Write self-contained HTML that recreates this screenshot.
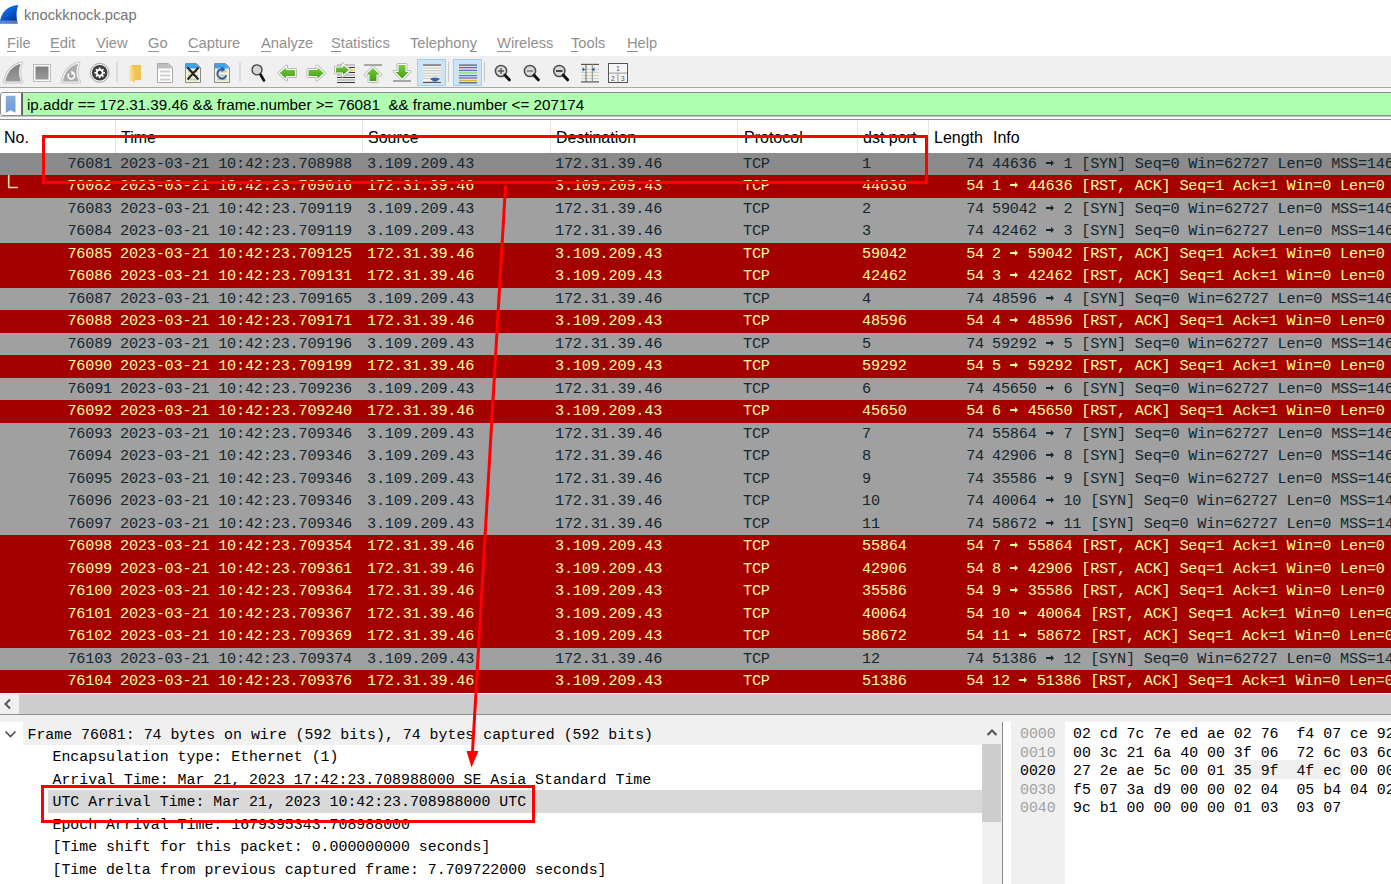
<!DOCTYPE html>
<html><head><meta charset="utf-8">
<style>
*{margin:0;padding:0;box-sizing:border-box}
html,body{width:1391px;height:884px;overflow:hidden;background:#fff}
body{position:relative;font-family:"Liberation Sans",sans-serif;color:#000}
.a{position:absolute}
.sans{font-family:"Liberation Sans",sans-serif}
.mono{font-family:"Liberation Mono",monospace}
#title{left:24px;top:5px;font-size:14.7px;line-height:20px;color:#747474;white-space:nowrap}
.menu{top:33.5px;font-size:14.7px;line-height:18px;color:#909090;white-space:nowrap}
.menu u{text-decoration:none;border-bottom:1px solid #909090}
#toolbar{left:0;top:56px;width:1391px;height:31px;background:#f0f0f0}
#tbline{left:0;top:87px;width:1391px;height:1px;background:#a8a8a8}
#filterwrap{left:0;top:88px;width:1391px;height:32px;background:#f7f7f7}
#filter{left:0;top:92px;width:1395px;height:24px;border:1px solid #8c8c8c;border-radius:3px;background:#b0ffb0;overflow:hidden}
#bm{left:0;top:0;width:22px;height:22px;background:#fff;border-right:2px solid #666}
#ftext{left:26px;top:3px;font-size:15.2px;line-height:18px;white-space:nowrap;color:#000}
#fline{left:0;top:119px;width:1391px;height:1px;background:#8d9299}
#fb2{left:0;top:116px;width:1391px;height:1px;background:#c4c4c4}
#hdr{left:0;top:120px;width:1391px;height:33px;background:#fff}
.hs{top:0;width:1px;height:33px;background:#e3e3e3}
.ht{top:9px;font-size:16px;line-height:18px;white-space:nowrap;color:#000}
.row{position:absolute;left:0;width:1391px;overflow:hidden;white-space:nowrap;font-family:"Liberation Mono",monospace;font-size:15.2px;letter-spacing:-0.19px}
.row .c{position:absolute;top:2px;line-height:18px}
.row.g{background:#a0a0a0;color:#12272e;--fg:#12272e}
.row.sel{background:#8b8b8b;color:#12272e;--fg:#12272e}
.row.r{background:#a40000;color:#fffc9c;--fg:#fffc9c}
.ar{position:relative;color:transparent}
.ar::before{content:"";position:absolute;left:0.5px;top:var(--art);width:6px;height:1.5px;background:var(--fg)}
.ar::after{content:"";position:absolute;left:5px;top:calc(var(--art) - 2.25px);width:0;height:0;border-left:3.8px solid var(--fg);border-top:3px solid transparent;border-bottom:3px solid transparent}
.row{--art:7px}
.c.no{right:1279px;text-align:right}
.c.tm{left:120px}
.c.src{left:367px}
.c.dst{left:555px}
.c.pr{left:743px}
.c.dp{left:862px}
.c.ln{right:407px;text-align:right}
.c.inf{left:992px}
#hsb{left:0;top:693px;width:1391px;height:21px;background:#fff}
#hsbl{left:0;top:694px;width:19px;height:20px;background:#f0f0f0}
#hsbs{left:19px;top:694px;width:1372px;height:20px;background:#cdcdcd}
#split1{left:0;top:714px;width:1391px;height:1px;background:#8a8f96}
#split2{left:0;top:715px;width:1391px;height:7px;background:#f0f0f0}
#det{left:0;top:722px;width:1002px;height:162px;background:#fff;overflow:hidden}
.dl{position:absolute;left:0;width:982px;font-family:"Liberation Mono",monospace;font-size:14.9px;white-space:nowrap;line-height:18px}
#vsb{left:982px;top:722px;width:20px;height:162px;background:#f0f0f0}
#vsbs{left:982px;top:744px;width:19px;height:78px;background:#cdcdcd}
#vsplit{left:1002px;top:722px;width:1px;height:162px;background:#8a8a8a}
#hex{left:1003px;top:722px;width:388px;height:162px;background:#fff}
#hexoff{left:1011px;top:722px;width:54px;height:162px;background:#f0f0f0}
.hl{position:absolute;font-family:"Liberation Mono",monospace;font-size:14.9px;white-space:pre;line-height:18px}
</style></head><body>

<!-- title bar -->
<svg class="a" style="left:0;top:0" width="22" height="26" viewBox="0 0 22 26">
<defs><linearGradient id="fin" x1="0" y1="0" x2="0.6" y2="1"><stop offset="0" stop-color="#1c7cf0"/><stop offset="0.55" stop-color="#0a5ad0"/><stop offset="1" stop-color="#08329a"/></linearGradient>
<linearGradient id="finb" x1="0" y1="0" x2="1" y2="0"><stop offset="0" stop-color="#5f9af0"/><stop offset="1" stop-color="#6d7fa8"/></linearGradient></defs>
<path d="M0 21 C1.5 12.5 7.5 5.6 18.4 5 C16.4 9.5 16 15.5 17.6 23.4 L0 23.4 Z" fill="url(#fin)"/>
<path d="M0.3 20.6 H17.2 L17.6 23.4 H0 Z" fill="url(#finb)" opacity="0.85"/>
</svg>
<div id="title" class="a">knockknock.pcap</div>

<!-- menu -->
<div class="a menu" style="left:7px"><u>F</u>ile</div>
<div class="a menu" style="left:50px"><u>E</u>dit</div>
<div class="a menu" style="left:96px"><u>V</u>iew</div>
<div class="a menu" style="left:148px"><u>G</u>o</div>
<div class="a menu" style="left:188px"><u>C</u>apture</div>
<div class="a menu" style="left:261px"><u>A</u>nalyze</div>
<div class="a menu" style="left:331px"><u>S</u>tatistics</div>
<div class="a menu" style="left:410px">Telephon<u>y</u></div>
<div class="a menu" style="left:497px"><u>W</u>ireless</div>
<div class="a menu" style="left:571px"><u>T</u>ools</div>
<div class="a menu" style="left:627px"><u>H</u>elp</div>

<!-- toolbar -->
<div id="toolbar" class="a"></div>
<svg class="a" style="left:0;top:0" width="640" height="88" viewBox="0 0 640 88">
<defs>
<linearGradient id="gfin" x1="0" y1="0" x2="0" y2="1"><stop offset="0" stop-color="#7f7f7f"/><stop offset="1" stop-color="#9a9a9a"/></linearGradient>
<linearGradient id="ggr" x1="0" y1="0" x2="0" y2="1"><stop offset="0" stop-color="#7ccf3a"/><stop offset="1" stop-color="#3f9a12"/></linearGradient>
<linearGradient id="gfold" x1="0" y1="0" x2="1" y2="0"><stop offset="0" stop-color="#fde9a6"/><stop offset="1" stop-color="#f1c350"/></linearGradient>
</defs>
<!-- separators -->
<g fill="#c9c9c9">
<rect x="116.5" y="62" width="1" height="20"/>
<rect x="239.5" y="62" width="1" height="20"/>
<rect x="448" y="62" width="1" height="20"/>
<rect x="484" y="62" width="1" height="20"/>
</g>
<!-- 1 shark fin -->
<path d="M4.5 82 C6.5 72 12.5 65 21.5 63 C19 69 19 76 22 82 Z" fill="none" stroke="#c2c2c2" stroke-width="3" stroke-linejoin="round"/><path d="M4.5 82 C6.5 72 12.5 65 21.5 63 C19 69 19 76 22 82 Z" fill="url(#gfin)" stroke="#f6f6f6" stroke-width="1.2" stroke-linejoin="round"/>
<!-- 2 stop -->
<rect x="33.5" y="64.5" width="17" height="17" fill="#fafafa" stroke="#bdbdbd"/>
<rect x="35.5" y="66.5" width="13" height="13" fill="url(#gfin)"/>
<!-- 3 reload fin -->
<path d="M62 82 C64 72 70 65 79 63 C76.5 69 76.5 76 79.5 82 Z" fill="none" stroke="#c8c8c8" stroke-width="3" stroke-linejoin="round"/><path d="M62 82 C64 72 70 65 79 63 C76.5 69 76.5 76 79.5 82 Z" fill="#ababab" stroke="#f6f6f6" stroke-width="1.2" stroke-linejoin="round"/>
<path d="M68.8 73.8 A3.2 3.2 0 1 0 73.2 73.2" fill="none" stroke="#fff" stroke-width="1.6"/>
<path d="M71.2 70.8 L74.6 72.6 L71.5 75 Z" fill="#fff"/>
<!-- 4 gear -->
<circle cx="99.7" cy="72.8" r="9.4" fill="#f4f4f4" stroke="#a5a5a5" stroke-width="1"/>
<circle cx="99.7" cy="72.8" r="7.8" fill="#3c3c3c"/>
<g transform="translate(99.7 72.8)" fill="#fff">
<circle r="3.7"/>
<rect x="-0.9" y="-5.3" width="1.8" height="10.6"/>
<rect x="-5.3" y="-0.9" width="10.6" height="1.8"/>
<rect x="-0.9" y="-5.3" width="1.8" height="10.6" transform="rotate(45)"/>
<rect x="-0.9" y="-5.3" width="1.8" height="10.6" transform="rotate(-45)"/>
<circle r="2" fill="#2a2a2a"/>
</g>
<!-- 5 folder -->
<path d="M131.5 65 H141 V80 H131.5 Z" fill="#efc455"/>
<path d="M129 66 L135 67.5 V82 L129 80.5 Z" fill="url(#gfold)"/>
<!-- 6 doc gray -->
<path d="M157.5 63.5 H168.5 L172.5 67.5 V82.5 H157.5 Z" fill="#fff" stroke="#a9a9a9"/>
<path d="M158 64 H168.3 L172 67.7 V68.5 H158 Z" fill="#bdbdbd"/>
<g fill="#cfcfcf"><rect x="160" y="70.5" width="10" height="2"/><rect x="160" y="74.5" width="10" height="2"/><rect x="160" y="78.5" width="10" height="2"/></g>
<!-- 7 doc X -->
<path d="M185.5 63.5 H196.5 L200.5 67.5 V82.5 H185.5 Z" fill="#f6f4df" stroke="#8a8a8a"/>
<path d="M186 64 H196.3 L200 67.7 V68.5 H186 Z" fill="#3ea3ea"/>
<g fill="#c9c9b5"><rect x="188" y="70.5" width="10" height="2"/><rect x="188" y="74.5" width="10" height="2"/><rect x="188" y="78.5" width="10" height="2"/></g>
<path d="M187.5 67.5 L198.5 79.5 M198.5 67.5 L187.5 79.5" stroke="#222" stroke-width="2"/>
<!-- 8 doc reload -->
<path d="M214.5 63.5 H225.5 L229.5 67.5 V82.5 H214.5 Z" fill="#f6f4df" stroke="#8a8a8a"/>
<path d="M215 64 H225.3 L229 67.7 V68.5 H215 Z" fill="#3ea3ea"/>
<g fill="#c9c9b5"><rect x="217" y="70.5" width="10" height="2"/><rect x="217" y="74.5" width="10" height="2"/><rect x="217" y="78.5" width="10" height="2"/></g>
<path d="M226.3 75.5 A4.6 4.6 0 1 1 222.5 69.3" fill="none" stroke="#2d5c9e" stroke-width="2"/>
<path d="M221.5 66.5 L225.5 69.5 L221.5 72 Z" fill="#2d5c9e"/>
<!-- 9 find -->
<circle cx="257" cy="69.8" r="5" fill="#d6d6d6" stroke="#3a3a3a" stroke-width="1.3"/>
<path d="M260.5 74.5 L264 80.5" stroke="#111" stroke-width="2.6" stroke-linecap="round"/>
<!-- 10 back -->
<path d="M279 73 L286.5 66 V69.5 H295.5 V76.5 H286.5 V80 Z" fill="none" stroke="#b9b9b9" stroke-width="3" stroke-linejoin="round"/><path d="M279 73 L286.5 66 V69.5 H295.5 V76.5 H286.5 V80 Z" fill="url(#ggr)" stroke="#fbfbfb" stroke-width="1.1" stroke-linejoin="round"/>
<!-- 11 forward -->
<path d="M324.5 73 L317 66 V69.5 H308 V76.5 H317 V80 Z" fill="none" stroke="#b9b9b9" stroke-width="3" stroke-linejoin="round"/><path d="M324.5 73 L317 66 V69.5 H308 V76.5 H317 V80 Z" fill="url(#ggr)" stroke="#fbfbfb" stroke-width="1.1" stroke-linejoin="round"/>
<!-- 12 go to packet -->
<g>
<rect x="337" y="64.5" width="18" height="1" fill="#9a9a9a"/>
<rect x="337" y="67" width="18" height="1" fill="#333"/>
<rect x="345" y="69.5" width="10" height="1.8" fill="#f2d831"/>
<rect x="337" y="72" width="18" height="1" fill="#333"/>
<rect x="337" y="74.5" width="18" height="1" fill="#9a9a9a"/>
<rect x="337" y="77" width="18" height="1" fill="#333"/>
<rect x="337" y="79.5" width="18" height="1" fill="#9a9a9a"/>
<rect x="337" y="82" width="18" height="1" fill="#333"/>
<path d="M335.5 67 H342.5 V63.8 L349.8 70 L342.5 76.2 V73 H335.5 Z" fill="none" stroke="#b9b9b9" stroke-width="3" stroke-linejoin="round"/><path d="M335.5 67 H342.5 V63.8 L349.8 70 L342.5 76.2 V73 H335.5 Z" fill="url(#ggr)" stroke="#fbfbfb" stroke-width="1.1" stroke-linejoin="round"/>
</g>
<!-- 13 first -->
<rect x="364" y="64" width="18" height="2" fill="#a8a8a8"/>
<path d="M373 67 L381 75 H377 V81.5 H369 V75 H365 Z" fill="none" stroke="#b9b9b9" stroke-width="3" stroke-linejoin="round"/><path d="M373 67 L381 75 H377 V81.5 H369 V75 H365 Z" fill="url(#ggr)" stroke="#fbfbfb" stroke-width="1.1" stroke-linejoin="round"/>
<!-- 14 last -->
<path d="M402 79.5 L410 71.5 H406 V64.5 H398 V71.5 H394 Z" fill="none" stroke="#b9b9b9" stroke-width="3" stroke-linejoin="round"/><path d="M402 79.5 L410 71.5 H406 V64.5 H398 V71.5 H394 Z" fill="url(#ggr)" stroke="#fbfbfb" stroke-width="1.1" stroke-linejoin="round"/>
<rect x="393" y="80" width="18" height="2" fill="#a8a8a8"/>
<!-- 15 autoscroll (pressed) -->
<rect x="417.5" y="59.5" width="28" height="26" fill="#cce4f7" stroke="#9fcdf5"/>
<rect x="423" y="65" width="18" height="18" fill="#f4f4f0"/>
<g fill="#c8c8c0"><rect x="423" y="67.6" width="18" height="1"/><rect x="423" y="70.2" width="18" height="1"/><rect x="423" y="72.8" width="18" height="1"/><rect x="423" y="75.4" width="18" height="1"/><rect x="423" y="78" width="18" height="1"/></g>
<rect x="423" y="64.5" width="18" height="1.2" fill="#555"/>
<rect x="423" y="81.8" width="18" height="1.2" fill="#555"/>
<path d="M430.5 78.5 H439.5 L436.5 81.5 H433.5 Z" fill="#2f66b3"/>
<ellipse cx="435" cy="79" rx="4.5" ry="1.6" fill="#2f66b3"/>
<!-- 16 colorize (pressed) -->
<rect x="453.5" y="59.5" width="28" height="26" fill="#cce4f7" stroke="#9fcdf5"/>
<rect x="459" y="64.5" width="18" height="1.2" fill="#555"/>
<rect x="459" y="67" width="18" height="1.2" fill="#e8393f"/>
<rect x="459" y="69.8" width="18" height="1.2" fill="#4c78bf"/>
<rect x="459" y="72.3" width="18" height="1.2" fill="#8ee04a"/>
<rect x="459" y="75" width="18" height="1.2" fill="#4c78bf"/>
<rect x="459" y="77.4" width="18" height="1.2" fill="#8d5c95"/>
<rect x="459" y="80" width="18" height="1.2" fill="#e5b32c"/>
<rect x="459" y="82.2" width="18" height="1.2" fill="#555"/>
<!-- 17 zoom in -->
<circle cx="501" cy="71" r="5.6" fill="#d8d8d8" stroke="#4a4a4a" stroke-width="1.5"/>
<path d="M505 75.2 L509.3 79.8" stroke="#111" stroke-width="3" stroke-linecap="round"/>
<path d="M498 71 H504 M501 68 V74" stroke="#555" stroke-width="1.3"/>
<!-- 18 zoom out -->
<circle cx="530" cy="71" r="5.6" fill="#d8d8d8" stroke="#4a4a4a" stroke-width="1.5"/>
<path d="M534 75.2 L538.3 79.8" stroke="#111" stroke-width="3" stroke-linecap="round"/>
<path d="M527 71 H533" stroke="#666" stroke-width="1.2"/>
<!-- 19 normal size -->
<circle cx="559.3" cy="71" r="5.6" fill="#d8d8d8" stroke="#4a4a4a" stroke-width="1.5"/>
<path d="M563.3 75.2 L567.6 79.8" stroke="#111" stroke-width="3" stroke-linecap="round"/>
<path d="M556 71 H562.6" stroke="#444" stroke-width="2"/>
<!-- 20 resize columns -->
<rect x="581" y="64.5" width="18" height="17.5" fill="#f2f2ea"/>
<g fill="#c8c8c0"><rect x="581" y="69" width="18" height="0.8"/><rect x="581" y="72" width="18" height="0.8"/><rect x="581" y="75" width="18" height="0.8"/><rect x="581" y="78" width="18" height="0.8"/></g>
<rect x="581" y="63.8" width="18" height="1.2" fill="#555"/>
<rect x="581" y="81.3" width="18" height="1.2" fill="#555"/>
<rect x="585.5" y="64" width="1" height="18" fill="#666"/>
<rect x="591.8" y="64" width="1" height="18" fill="#888"/>
<path d="M582.5 67.2 L585.3 69.5 L582.5 71.8 Z" fill="#2f66b3"/>
<path d="M594.5 67.2 L591.7 69.5 L594.5 71.8 Z" fill="#2f66b3"/>
<!-- 21 layout -->
<rect x="608.5" y="63.5" width="19" height="19" fill="#f6f6f6" stroke="#555" stroke-width="1"/>
<rect x="609" y="72.5" width="18" height="1.3" fill="#aaa"/>
<rect x="617.3" y="73" width="1.3" height="9" fill="#aaa"/>
<text x="618" y="70.6" font-family="Liberation Sans" font-size="7" fill="#555" text-anchor="middle">1</text>
<text x="613" y="80.6" font-family="Liberation Sans" font-size="7" fill="#555" text-anchor="middle">2</text>
<text x="622.7" y="80.6" font-family="Liberation Sans" font-size="7" fill="#555" text-anchor="middle">3</text>
</svg>

<div id="tbline" class="a"></div>

<!-- filter -->
<div id="filterwrap" class="a"></div>
<div id="filter" class="a">
  <div id="bm" class="a"><svg class="a" style="left:4px;top:2px" width="11" height="18" viewBox="0 0 11 18"><defs><linearGradient id="bmg" x1="0" y1="0" x2="0" y2="1"><stop offset="0" stop-color="#8aaedc"/><stop offset="1" stop-color="#6f9bd6"/></linearGradient></defs><path d="M0.8 0.8H10.5V17.8L5.6 15.2L0.8 17.8Z" fill="url(#bmg)"/></svg></div>
  <div id="ftext" class="a">ip.addr == 172.31.39.46 &amp;&amp; frame.number &gt;= 76081&nbsp; &amp;&amp; frame.number &lt;= 207174</div>
</div>
<div id="fb2" class="a"></div>
<div id="fline" class="a"></div>

<!-- header -->
<div id="hdr" class="a">
  <div class="a ht" style="left:4px">No.</div>
  <div class="a hs" style="left:115px"></div>
  <div class="a ht" style="left:121px">Time</div>
  <div class="a hs" style="left:362px"></div>
  <div class="a ht" style="left:368px">Source</div>
  <div class="a hs" style="left:550px"></div>
  <div class="a ht" style="left:556px">Destination</div>
  <div class="a hs" style="left:737px"></div>
  <div class="a ht" style="left:744px">Protocol</div>
  <div class="a hs" style="left:857px"></div>
  <div class="a ht" style="left:863px">dst port</div>
  <div class="a hs" style="left:928px"></div>
  <div class="a ht" style="left:934px">Length</div>
  <div class="a ht" style="left:993px">Info</div>
</div>

<div class="row sel" style="top:153px;height:22px"><span class="c no">76081</span><span class="c tm">2023-03-21 10:42:23.708988</span><span class="c src">3.109.209.43</span><span class="c dst">172.31.39.46</span><span class="c pr">TCP</span><span class="c dp">1</span><span class="c ln">74</span><span class="c inf">44636 <span class=ar>→</span> 1 [SYN] Seq=0 Win=62727 Len=0 MSS=1460 SACK_PERM=1</span></div>
<div class="row r" style="top:175px;height:23px"><span class="c no">76082</span><span class="c tm">2023-03-21 10:42:23.709016</span><span class="c src">172.31.39.46</span><span class="c dst">3.109.209.43</span><span class="c pr">TCP</span><span class="c dp">44636</span><span class="c ln">54</span><span class="c inf">1 <span class=ar>→</span> 44636 [RST, ACK] Seq=1 Ack=1 Win=0 Len=0</span></div>
<div class="row g" style="top:198px;height:22px"><span class="c no">76083</span><span class="c tm">2023-03-21 10:42:23.709119</span><span class="c src">3.109.209.43</span><span class="c dst">172.31.39.46</span><span class="c pr">TCP</span><span class="c dp">2</span><span class="c ln">74</span><span class="c inf">59042 <span class=ar>→</span> 2 [SYN] Seq=0 Win=62727 Len=0 MSS=1460 SACK_PERM=1</span></div>
<div class="row g" style="top:220px;height:23px"><span class="c no">76084</span><span class="c tm">2023-03-21 10:42:23.709119</span><span class="c src">3.109.209.43</span><span class="c dst">172.31.39.46</span><span class="c pr">TCP</span><span class="c dp">3</span><span class="c ln">74</span><span class="c inf">42462 <span class=ar>→</span> 3 [SYN] Seq=0 Win=62727 Len=0 MSS=1460 SACK_PERM=1</span></div>
<div class="row r" style="top:243px;height:22px"><span class="c no">76085</span><span class="c tm">2023-03-21 10:42:23.709125</span><span class="c src">172.31.39.46</span><span class="c dst">3.109.209.43</span><span class="c pr">TCP</span><span class="c dp">59042</span><span class="c ln">54</span><span class="c inf">2 <span class=ar>→</span> 59042 [RST, ACK] Seq=1 Ack=1 Win=0 Len=0</span></div>
<div class="row r" style="top:265px;height:23px"><span class="c no">76086</span><span class="c tm">2023-03-21 10:42:23.709131</span><span class="c src">172.31.39.46</span><span class="c dst">3.109.209.43</span><span class="c pr">TCP</span><span class="c dp">42462</span><span class="c ln">54</span><span class="c inf">3 <span class=ar>→</span> 42462 [RST, ACK] Seq=1 Ack=1 Win=0 Len=0</span></div>
<div class="row g" style="top:288px;height:22px"><span class="c no">76087</span><span class="c tm">2023-03-21 10:42:23.709165</span><span class="c src">3.109.209.43</span><span class="c dst">172.31.39.46</span><span class="c pr">TCP</span><span class="c dp">4</span><span class="c ln">74</span><span class="c inf">48596 <span class=ar>→</span> 4 [SYN] Seq=0 Win=62727 Len=0 MSS=1460 SACK_PERM=1</span></div>
<div class="row r" style="top:310px;height:23px"><span class="c no">76088</span><span class="c tm">2023-03-21 10:42:23.709171</span><span class="c src">172.31.39.46</span><span class="c dst">3.109.209.43</span><span class="c pr">TCP</span><span class="c dp">48596</span><span class="c ln">54</span><span class="c inf">4 <span class=ar>→</span> 48596 [RST, ACK] Seq=1 Ack=1 Win=0 Len=0</span></div>
<div class="row g" style="top:333px;height:22px"><span class="c no">76089</span><span class="c tm">2023-03-21 10:42:23.709196</span><span class="c src">3.109.209.43</span><span class="c dst">172.31.39.46</span><span class="c pr">TCP</span><span class="c dp">5</span><span class="c ln">74</span><span class="c inf">59292 <span class=ar>→</span> 5 [SYN] Seq=0 Win=62727 Len=0 MSS=1460 SACK_PERM=1</span></div>
<div class="row r" style="top:355px;height:23px"><span class="c no">76090</span><span class="c tm">2023-03-21 10:42:23.709199</span><span class="c src">172.31.39.46</span><span class="c dst">3.109.209.43</span><span class="c pr">TCP</span><span class="c dp">59292</span><span class="c ln">54</span><span class="c inf">5 <span class=ar>→</span> 59292 [RST, ACK] Seq=1 Ack=1 Win=0 Len=0</span></div>
<div class="row g" style="top:378px;height:22px"><span class="c no">76091</span><span class="c tm">2023-03-21 10:42:23.709236</span><span class="c src">3.109.209.43</span><span class="c dst">172.31.39.46</span><span class="c pr">TCP</span><span class="c dp">6</span><span class="c ln">74</span><span class="c inf">45650 <span class=ar>→</span> 6 [SYN] Seq=0 Win=62727 Len=0 MSS=1460 SACK_PERM=1</span></div>
<div class="row r" style="top:400px;height:23px"><span class="c no">76092</span><span class="c tm">2023-03-21 10:42:23.709240</span><span class="c src">172.31.39.46</span><span class="c dst">3.109.209.43</span><span class="c pr">TCP</span><span class="c dp">45650</span><span class="c ln">54</span><span class="c inf">6 <span class=ar>→</span> 45650 [RST, ACK] Seq=1 Ack=1 Win=0 Len=0</span></div>
<div class="row g" style="top:423px;height:22px"><span class="c no">76093</span><span class="c tm">2023-03-21 10:42:23.709346</span><span class="c src">3.109.209.43</span><span class="c dst">172.31.39.46</span><span class="c pr">TCP</span><span class="c dp">7</span><span class="c ln">74</span><span class="c inf">55864 <span class=ar>→</span> 7 [SYN] Seq=0 Win=62727 Len=0 MSS=1460 SACK_PERM=1</span></div>
<div class="row g" style="top:445px;height:23px"><span class="c no">76094</span><span class="c tm">2023-03-21 10:42:23.709346</span><span class="c src">3.109.209.43</span><span class="c dst">172.31.39.46</span><span class="c pr">TCP</span><span class="c dp">8</span><span class="c ln">74</span><span class="c inf">42906 <span class=ar>→</span> 8 [SYN] Seq=0 Win=62727 Len=0 MSS=1460 SACK_PERM=1</span></div>
<div class="row g" style="top:468px;height:22px"><span class="c no">76095</span><span class="c tm">2023-03-21 10:42:23.709346</span><span class="c src">3.109.209.43</span><span class="c dst">172.31.39.46</span><span class="c pr">TCP</span><span class="c dp">9</span><span class="c ln">74</span><span class="c inf">35586 <span class=ar>→</span> 9 [SYN] Seq=0 Win=62727 Len=0 MSS=1460 SACK_PERM=1</span></div>
<div class="row g" style="top:490px;height:23px"><span class="c no">76096</span><span class="c tm">2023-03-21 10:42:23.709346</span><span class="c src">3.109.209.43</span><span class="c dst">172.31.39.46</span><span class="c pr">TCP</span><span class="c dp">10</span><span class="c ln">74</span><span class="c inf">40064 <span class=ar>→</span> 10 [SYN] Seq=0 Win=62727 Len=0 MSS=1460 SACK_PERM=1</span></div>
<div class="row g" style="top:513px;height:22px"><span class="c no">76097</span><span class="c tm">2023-03-21 10:42:23.709346</span><span class="c src">3.109.209.43</span><span class="c dst">172.31.39.46</span><span class="c pr">TCP</span><span class="c dp">11</span><span class="c ln">74</span><span class="c inf">58672 <span class=ar>→</span> 11 [SYN] Seq=0 Win=62727 Len=0 MSS=1460 SACK_PERM=1</span></div>
<div class="row r" style="top:535px;height:23px"><span class="c no">76098</span><span class="c tm">2023-03-21 10:42:23.709354</span><span class="c src">172.31.39.46</span><span class="c dst">3.109.209.43</span><span class="c pr">TCP</span><span class="c dp">55864</span><span class="c ln">54</span><span class="c inf">7 <span class=ar>→</span> 55864 [RST, ACK] Seq=1 Ack=1 Win=0 Len=0</span></div>
<div class="row r" style="top:558px;height:22px"><span class="c no">76099</span><span class="c tm">2023-03-21 10:42:23.709361</span><span class="c src">172.31.39.46</span><span class="c dst">3.109.209.43</span><span class="c pr">TCP</span><span class="c dp">42906</span><span class="c ln">54</span><span class="c inf">8 <span class=ar>→</span> 42906 [RST, ACK] Seq=1 Ack=1 Win=0 Len=0</span></div>
<div class="row r" style="top:580px;height:23px"><span class="c no">76100</span><span class="c tm">2023-03-21 10:42:23.709364</span><span class="c src">172.31.39.46</span><span class="c dst">3.109.209.43</span><span class="c pr">TCP</span><span class="c dp">35586</span><span class="c ln">54</span><span class="c inf">9 <span class=ar>→</span> 35586 [RST, ACK] Seq=1 Ack=1 Win=0 Len=0</span></div>
<div class="row r" style="top:603px;height:22px"><span class="c no">76101</span><span class="c tm">2023-03-21 10:42:23.709367</span><span class="c src">172.31.39.46</span><span class="c dst">3.109.209.43</span><span class="c pr">TCP</span><span class="c dp">40064</span><span class="c ln">54</span><span class="c inf">10 <span class=ar>→</span> 40064 [RST, ACK] Seq=1 Ack=1 Win=0 Len=0</span></div>
<div class="row r" style="top:625px;height:23px"><span class="c no">76102</span><span class="c tm">2023-03-21 10:42:23.709369</span><span class="c src">172.31.39.46</span><span class="c dst">3.109.209.43</span><span class="c pr">TCP</span><span class="c dp">58672</span><span class="c ln">54</span><span class="c inf">11 <span class=ar>→</span> 58672 [RST, ACK] Seq=1 Ack=1 Win=0 Len=0</span></div>
<div class="row g" style="top:648px;height:22px"><span class="c no">76103</span><span class="c tm">2023-03-21 10:42:23.709374</span><span class="c src">3.109.209.43</span><span class="c dst">172.31.39.46</span><span class="c pr">TCP</span><span class="c dp">12</span><span class="c ln">74</span><span class="c inf">51386 <span class=ar>→</span> 12 [SYN] Seq=0 Win=62727 Len=0 MSS=1460 SACK_PERM=1</span></div>
<div class="row r" style="top:670px;height:23px"><span class="c no">76104</span><span class="c tm">2023-03-21 10:42:23.709376</span><span class="c src">172.31.39.46</span><span class="c dst">3.109.209.43</span><span class="c pr">TCP</span><span class="c dp">51386</span><span class="c ln">54</span><span class="c inf">12 <span class=ar>→</span> 51386 [RST, ACK] Seq=1 Ack=1 Win=0 Len=0</span></div>

<!-- related packet markers -->
<svg class="a" style="left:0;top:150px" width="30" height="45" viewBox="0 150 30 45">
<path d="M18 164.8 H8.7 V175" fill="none" stroke="#7c8b95" stroke-width="1.5"/>
<path d="M8.7 175 V187.5 H18" fill="none" stroke="#f6dfb6" stroke-width="1.6"/>
</svg>
<!-- h scrollbar -->
<div id="hsb" class="a"></div>
<div id="hsbl" class="a"></div>
<div id="hsbs" class="a"></div>
<svg class="a" style="left:3px;top:698px" width="10" height="12" viewBox="0 0 10 12"><path d="M7 1.5L2.5 6L7 10.5" fill="none" stroke="#555" stroke-width="2"/></svg>
<div id="split1" class="a"></div>
<div id="split2" class="a"></div>

<!-- details -->
<div id="det" class="a">
<div class="a" style="left:23px;top:0px;width:959px;height:23px;background:#f0f0f0"></div>
<svg class="a" style="left:4px;top:8px" width="13" height="9" viewBox="0 0 13 9"><path d="M1.5 1.5L6.5 6.5L11.5 1.5" fill="none" stroke="#505050" stroke-width="1.7"/></svg>
<div class="dl" style="left:27.5px;top:4px">Frame 76081: 74 bytes on wire (592 bits), 74 bytes captured (592 bits)</div>
<div class="dl" style="left:52.5px;top:26px">Encapsulation type: Ethernet (1)</div>
<div class="dl" style="left:52.5px;top:49px">Arrival Time: Mar 21, 2023 17:42:23.708988000 SE Asia Standard Time</div>
<div class="a" style="left:48px;top:68px;width:934px;height:23px;background:#d9d9d9"></div>
<div class="dl" style="left:52.5px;top:71px">UTC Arrival Time: Mar 21, 2023 10:42:23.708988000 UTC</div>
<div class="dl" style="left:52.5px;top:94px">Epoch Arrival Time: 1679395343.708988000</div>
<div class="dl" style="left:52.5px;top:116px">[Time shift for this packet: 0.000000000 seconds]</div>
<div class="dl" style="left:52.5px;top:139px">[Time delta from previous captured frame: 7.709722000 seconds]</div>
</div>
<div id="vsb" class="a"></div>
<div id="vsbs" class="a"></div>
<svg class="a" style="left:986px;top:728px" width="12" height="10" viewBox="0 0 12 10"><path d="M1.5 7L6 2.5L10.5 7" fill="none" stroke="#505050" stroke-width="2"/></svg>
<div id="vsplit" class="a"></div>

<!-- hex -->
<div id="hex" class="a"></div>
<div id="hexoff" class="a"></div>
<div class="a" style="left:1233px;top:760px;width:109px;height:19px;background:#f0f0f0"></div>
<div class="hl" style="left:1020px;top:725px;color:#a0a0a0">0000</div>
<div class="hl" style="left:1073px;top:725px;color:#000">02 cd 7c 7e ed ae 02 76  f4 07 ce 92 08 00 45 00</div>
<div class="hl" style="left:1020px;top:744px;color:#a0a0a0">0010</div>
<div class="hl" style="left:1073px;top:744px;color:#000">00 3c 21 6a 40 00 3f 06  72 6c 03 6d d1 2b ac 1f</div>
<div class="hl" style="left:1020px;top:762px;color:#000">0020</div>
<div class="hl" style="left:1073px;top:762px;color:#000">27 2e ae 5c 00 01 35 9f  4f ec 00 00 00 00 a0 02</div>
<div class="hl" style="left:1020px;top:781px;color:#a0a0a0">0030</div>
<div class="hl" style="left:1073px;top:781px;color:#000">f5 07 3a d9 00 00 02 04  05 b4 04 02 08 0a 1e 7a</div>
<div class="hl" style="left:1020px;top:799px;color:#a0a0a0">0040</div>
<div class="hl" style="left:1073px;top:799px;color:#000">9c b1 00 00 00 00 01 03  03 07</div>

<!-- annotations -->
<svg class="a" style="left:0;top:0" width="1391" height="884" viewBox="0 0 1391 884">
<rect x="43.5" y="136.5" width="883" height="46" fill="none" stroke="#ff0000" stroke-width="3"/>
<rect x="42.5" y="786.5" width="491" height="35" fill="none" stroke="#ff0000" stroke-width="3"/>
<line x1="505.5" y1="186" x2="472.5" y2="752" stroke="#ff0000" stroke-width="3"/>
<path d="M466.5 751 L478.5 751 L471.5 767.5 Z" fill="#ff0000"/>
</svg>
</body></html>
